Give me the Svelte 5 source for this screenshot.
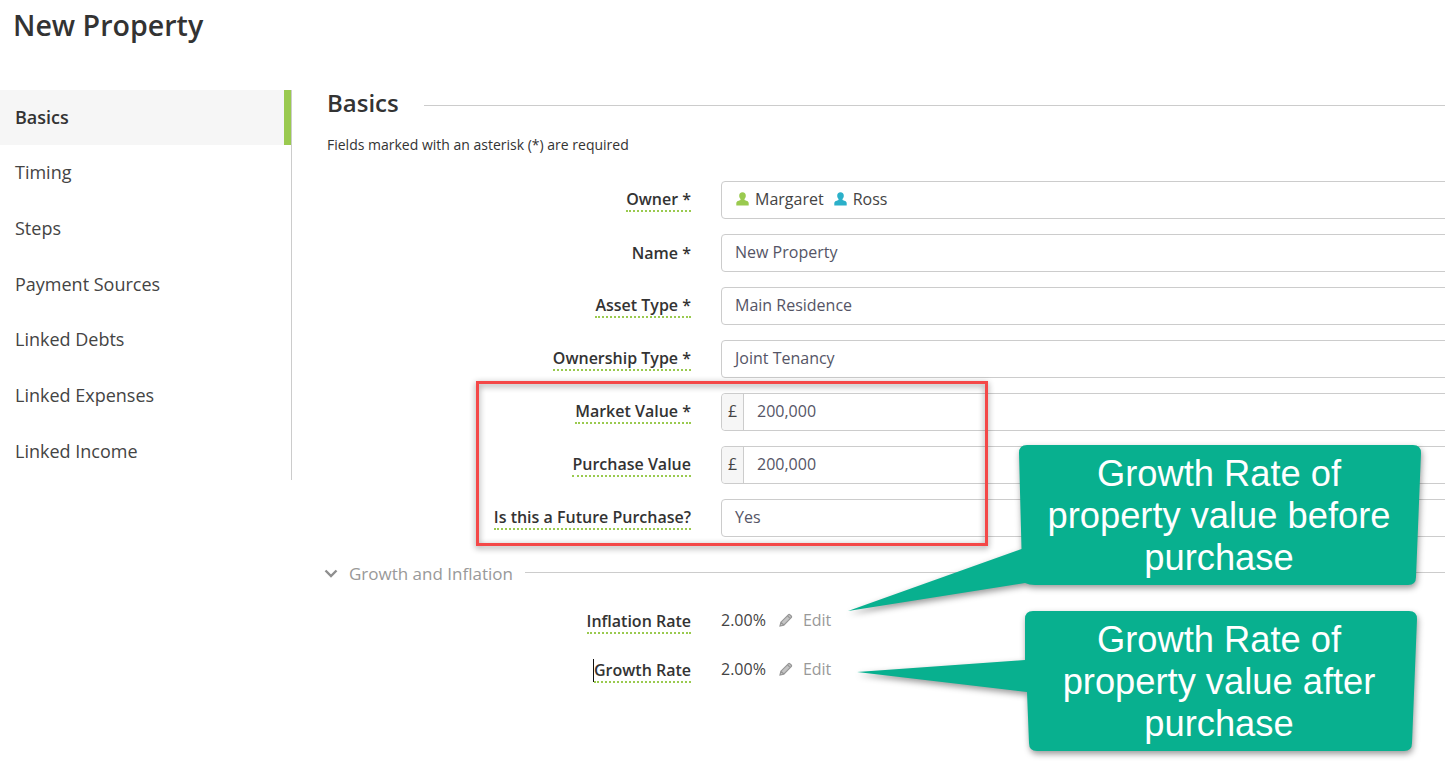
<script>
  const sideItems = ['Basics', 'Timing', 'Steps', 'Payment Sources', 'Linked Debts', 'Linked Expenses', 'Linked Income'];
  const rates = [
    { label: 'Inflation Rate', value: '2.00%' },
    { label: 'Growth Rate', value: '2.00%', caret: true }
  ];
</script>

{#snippet person(color)}
  <svg class="person" width="13" height="14" viewBox="0 0 13 14">
    <path fill={color} d="M6.500 0.300c2.100 0 3.300 1.400 3.300 3.500 0 1.300-.5 2.500-1.300 3.200v1l2.500.9c1.100.4 1.700 1.200 1.700 2.300v2.400H.3v-2.400c0-1.100.6-1.900 1.700-2.300l2.500-.9V7c-.8-.7-1.300-1.900-1.300-3.200 0-2.100 1.200-3.500 3.300-3.500z"/>
  </svg>
{/snippet}

<div class="page">
  <h1>New Property</h1>

  <div class="layout">
    <nav class="side">
      {#each sideItems as item, i}
        <div class="side-item" class:active={i === 0}>{item}</div>
      {/each}
    </nav>

    <main class="content">
      <div class="section-head">
        <h2>Basics</h2>
        <span class="rule"></span>
      </div>
      <p class="hint">Fields marked with an asterisk (*) are required</p>

      <div class="form">
        <div class="label"><span class="tip">Owner *</span></div>
        <div class="field owners">
          <span class="owner">{@render person('#9aca4f')}Margaret</span>
          <span class="owner">{@render person('#2bb0c9')}Ross</span>
        </div>

        <div class="label"><span>Name *</span></div>
        <div class="field">New Property</div>

        <div class="label"><span class="tip">Asset Type *</span></div>
        <div class="field">Main Residence</div>

        <div class="label"><span class="tip">Ownership Type *</span></div>
        <div class="field">Joint Tenancy</div>

        <div class="label"><span class="tip">Market Value *</span></div>
        <div class="field money"><span class="prefix">£</span><span class="amount">200,000</span></div>

        <div class="label"><span class="tip">Purchase Value</span></div>
        <div class="field money"><span class="prefix">£</span><span class="amount">200,000</span></div>

        <div class="label"><span class="tip">Is this a Future Purchase?</span></div>
        <div class="field">Yes</div>
      </div>

      <div class="growth-head">
        <svg width="14" height="9" viewBox="0 0 14 9"><path d="M1.500 1.500 7 7l5.500-5.500" fill="none" stroke="#8f8f8f" stroke-width="2.400"/></svg>
        <span class="growth-title">Growth and Inflation</span>
        <span class="rule"></span>
      </div>

      <div class="rates">
        {#each rates as rate}
          <div class="label">
            <span class="tip" class:caret={rate.caret}>{rate.label}</span>
          </div>
          <div class="rate">
            <span>{rate.value}</span>
            <svg class="pencil" width="14" height="14" viewBox="0 0 14 14">
              <path d="M1 13l.9-3.800 7.400-7.400c.5-.5 1.200-.5 1.700 0l1.200 1.200c.5.5.5 1.200 0 1.700l-7.400 7.400zM8.400 2.700l2.900 2.900M2 9.300l2.700 2.700" fill="#c4c4c4" stroke="#969696" stroke-width="1.200"/>
            </svg>
            <span class="edit">Edit</span>
          </div>
        {/each}
      </div>
    </main>
  </div>

  <div class="red-box"></div>

  <div class="callout">
    <svg width="1445" height="774" viewBox="0 0 1445 774">
      <path fill="#08b08f" d="M1027 445H1413Q1421 445 1421 453L1416 577Q1416 585 1408 585H1035Q1029 585 1025 583L848 611 1021.500 549 1019 453Q1019 445 1027 445z"/>
    </svg>
    <div class="callout-text first">Growth Rate of<br />property value before<br />purchase</div>
  </div>

  <div class="callout">
    <svg width="1445" height="774" viewBox="0 0 1445 774">
      <path fill="#08b08f" d="M1033 611H1409Q1417 611 1417 619L1412 743Q1412 751 1404 751H1037Q1029 751 1029 743L1027 692 857 672 1025 660 1025 619Q1025 611 1033 611z"/>
    </svg>
    <div class="callout-text second">Growth Rate of<br />property value after<br />purchase</div>
  </div>
</div>

<style>
  :global(body) {
    margin: 0;
    background: #fff;
    overflow: hidden;
  }

  .page {
    position: relative;
    width: 1445px;
    height: 774px;
    overflow: hidden;
    font-family: "Open Sans", sans-serif;
    color: #333;
  }

  h1 {
    margin: 0;
    padding: 5px 0 0 13px;
    height: 90px;
    box-sizing: border-box;
    font-size: 28.600px;
    line-height: 40px;
    font-weight: 600;
    color: #333;
  }

  .layout {
    display: flex;
    align-items: flex-start;
  }

  .side {
    width: 292px;
    flex: none;
    box-sizing: border-box;
    border-right: 1px solid #ccc;
  }

  .side-item {
    height: 55.800px;
    line-height: 54px;
    padding-left: 15px;
    font-size: 18px;
    color: #444;
  }

  .side-item.active {
    height: 55px;
    background: #f6f6f6;
    border-right: 7px solid #9aca4f;
    font-weight: 600;
    color: #333;
  }

  .content {
    flex: 1;
    min-width: 0;
    padding-left: 35px;
  }

  .section-head {
    display: flex;
    align-items: center;
    height: 26px;
  }

  h2 {
    margin: 0;
    font-size: 24px;
    line-height: 26px;
    font-weight: 600;
    color: #333;
  }

  .rule {
    flex: 1;
    height: 1px;
    background: #ccc;
    margin-left: 25px;
    position: relative;
    top: 2px;
  }

  .hint {
    margin: 0;
    padding-top: 19px;
    font-size: 14px;
    line-height: 20px;
    color: #333;
  }

  .form {
    display: grid;
    grid-template-columns: 364px 800px;
    column-gap: 30px;
    row-gap: 15px;
    margin-top: 26px;
  }

  .label {
    display: flex;
    justify-content: flex-end;
    align-items: center;
    font-size: 16px;
    font-weight: 600;
    color: #333;
    line-height: 21px;
  }

  .tip {
    position: relative;
    border-bottom: 2px dotted #9aca4f;
  }

  .caret::before {
    content: "";
    position: absolute;
    left: -1px;
    top: -1px;
    width: 1px;
    height: 23px;
    background: #111;
  }

  .field {
    height: 38px;
    box-sizing: border-box;
    border: 1px solid #ccc;
    border-radius: 4px;
    padding-left: 13px;
    font-size: 16px;
    line-height: 35px;
    color: #555566;
    display: flex;
  }

  .owners {
    gap: 9px;
    color: #444;
  }

  .owner {
    display: flex;
    align-items: center;
    position: relative;
    top: -1px;
  }

  .person {
    margin-right: 6px;
    margin-left: 1px;
  }

  .money {
    padding-left: 0;
  }

  .prefix {
    width: 21px;
    flex: none;
    text-align: center;
    background: #f6f6f6;
    border-right: 1px solid #ccc;
    border-radius: 4px 0 0 4px;
    color: #444;
  }

  .amount {
    padding-left: 13px;
  }

  .growth-head {
    display: flex;
    align-items: center;
    height: 24px;
    margin-top: 24px;
    margin-left: -3px;
  }

  .growth-title {
    margin-left: 11px;
    font-size: 17px;
    color: #999;
  }

  .growth-head .rule {
    margin-left: 12px;
    top: -1px;
  }

  .rates {
    display: grid;
    grid-template-columns: 364px 400px;
    column-gap: 30px;
    row-gap: 26px;
    margin-top: 26px;
  }

  .rate {
    display: flex;
    align-items: center;
    font-size: 16px;
    color: #444;
    height: 23px;
    margin-top: -3px;
  }

  .pencil {
    margin-left: 13px;
  }

  .edit {
    margin-left: 10px;
    color: #999;
  }

  /* annotations drawn over the form */
  .red-box {
    position: absolute;
    left: 476px;
    top: 381px;
    width: 512px;
    height: 165px;
    box-sizing: border-box;
    border: 3px solid #f44848;
    filter: drop-shadow(0 2px 3px rgba(0, 0, 0, 0.45));
  }

  .callout svg {
    position: absolute;
    left: 0;
    top: 0;
    filter: drop-shadow(1px 3px 3px rgba(0, 0, 0, 0.4));
  }

  .callout-text {
    position: absolute;
    left: 1020px;
    width: 398px;
    text-align: center;
    font-family: "Liberation Sans", Arial, sans-serif;
    font-size: 36.300px;
    line-height: 42px;
    color: #fff;
  }

  .first {
    top: 453px;
  }

  .second {
    top: 619px;
  }
</style>
